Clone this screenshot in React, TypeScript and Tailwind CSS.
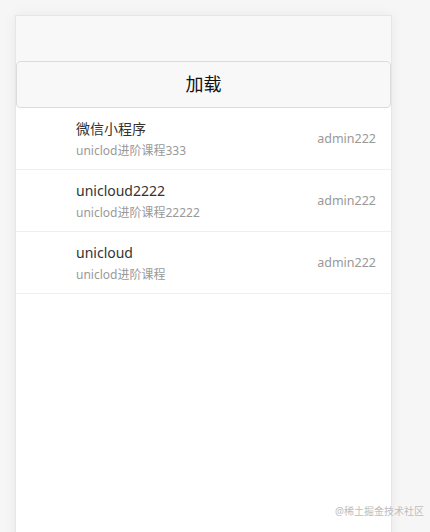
import React from 'react'

const items = [
  { title: '微信小程序', sub: 'uniclod进阶课程333', author: 'admin222' },
  { title: 'unicloud2222', sub: 'uniclod进阶课程22222', author: 'admin222' },
  { title: 'unicloud', sub: 'uniclod进阶课程', author: 'admin222' },
]

export default function App() {
  return (
    <div
      className="relative w-[430px] h-[532px] overflow-hidden bg-[#f6f6f6] pt-[15px] pl-[15px]"
      style={{ fontFamily: '"Noto Sans", "Noto Sans CJK SC", sans-serif' }}
    >
      {/* 手机框 */}
      <div className="w-[377px] h-[600px] bg-white border-l border-t border-r border-[#e6e6e6] shadow-[0_0_12px_rgba(0,0,0,0.06)]">
        <div className="h-[45px] bg-[#f8f8f8]" />
        <button className="w-full h-[47px] bg-[#f8f8f8] border border-[#dcdcdc] rounded-[4px] text-[18px] text-[#111]">
          加载
        </button>
        <div>
          {items.map((it, i) => (
            <div
              key={i}
              className="flex items-center justify-between h-[62px] pl-[60px] pr-[15px] border-b border-[#efefef]"
            >
              <div className="flex flex-col leading-none pt-[1px]">
                <span className="text-[14px] text-[#333] leading-[20px]">{it.title}</span>
                <span className="text-[12px] text-[#999] leading-[18px] mt-[3px]">{it.sub}</span>
              </div>
              <span className="text-[12.5px] text-[#999] pt-[2px]">{it.author}</span>
            </div>
          ))}
        </div>
      </div>

      {/* 水印 */}
      <span className="absolute left-[335px] top-[504px] text-[10px] text-[#bdbdbd]">
        @稀土掘金技术社区
      </span>
    </div>
  )
}
